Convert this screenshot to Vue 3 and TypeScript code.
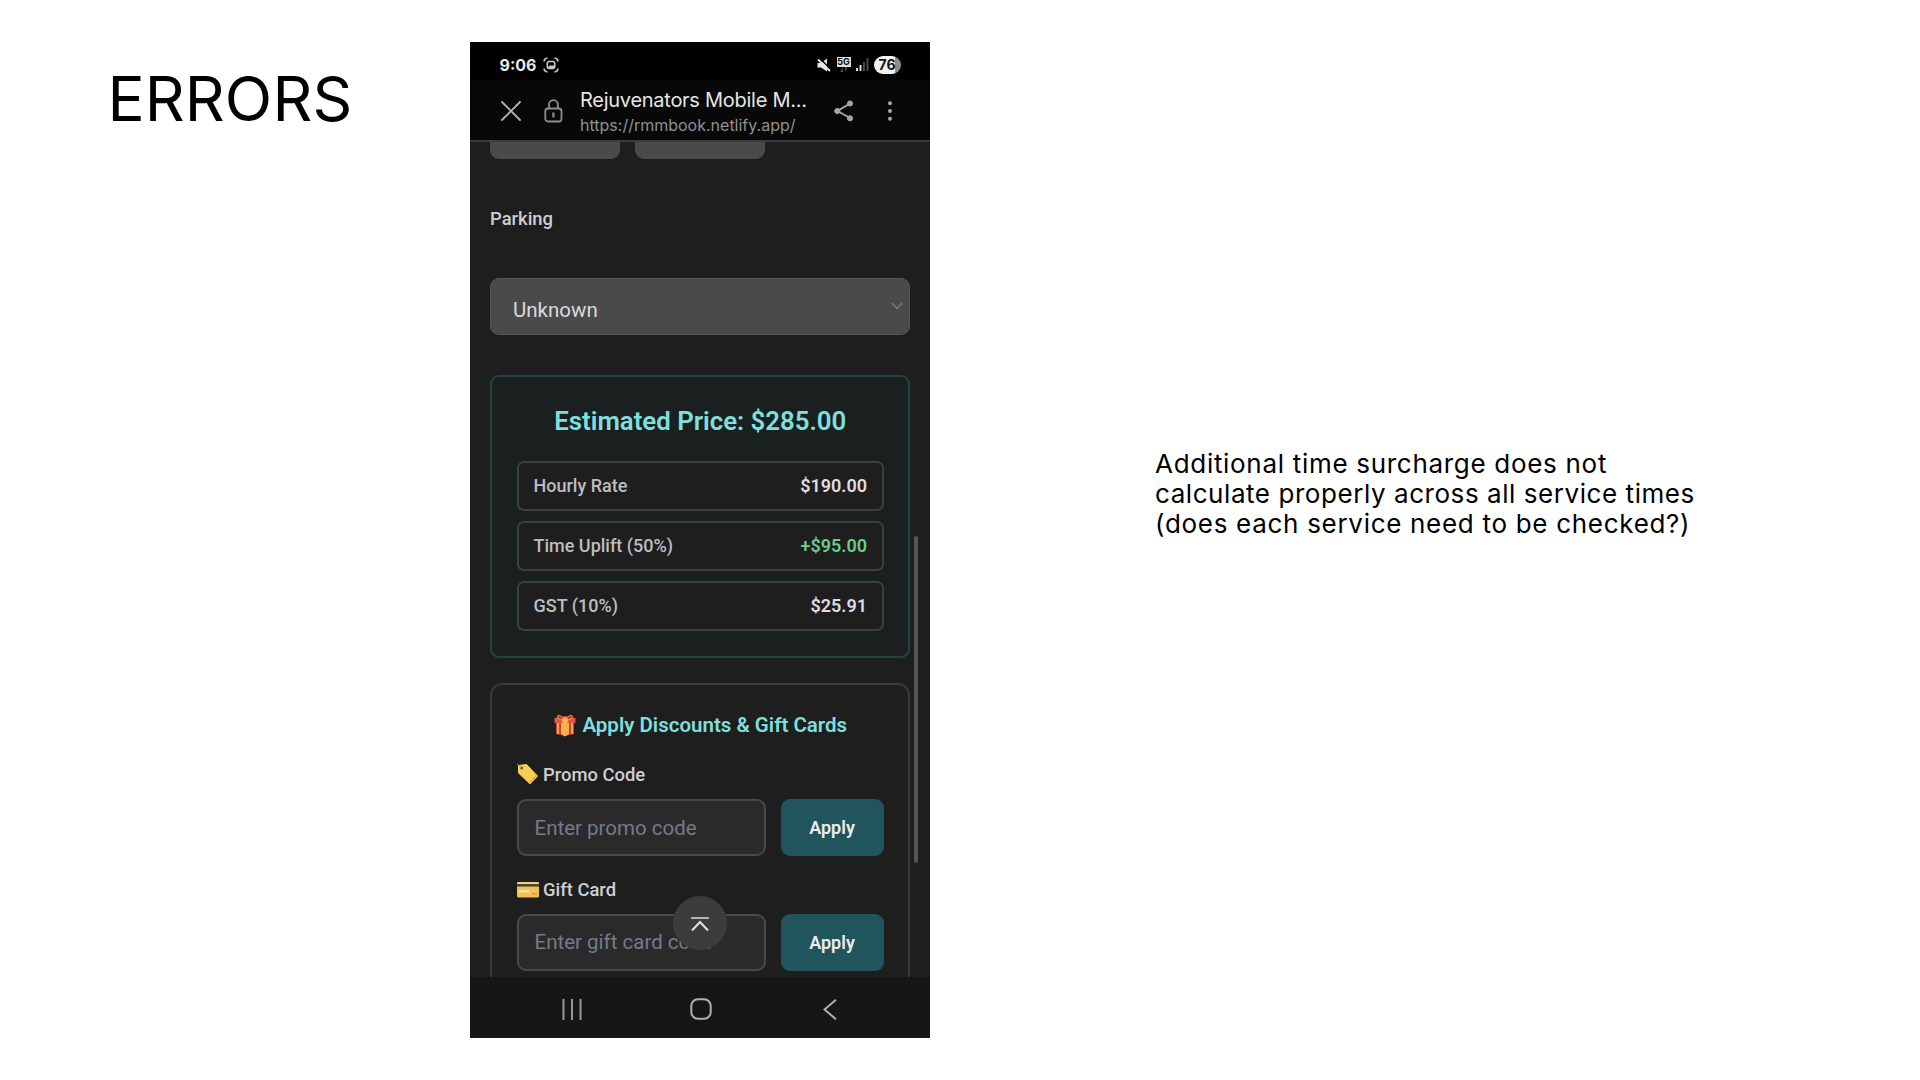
<script setup lang="ts">
interface PriceRow {
  label: string
  amount: string
  positive?: boolean
}

const rows: PriceRow[] = [
  { label: 'Hourly Rate', amount: '$190.00' },
  { label: 'Time Uplift (50%)', amount: '+$95.00', positive: true },
  { label: 'GST (10%)', amount: '$25.91' },
]

const notes: string[] = [
  'Additional time surcharge does not',
  'calculate properly across all service times',
  '(does each service need to be checked?)',
]
</script>

<template>
  <main class="slide">
    <h1 class="title">ERRORS</h1>

    <section class="phone">
      <div class="status">
        <span class="clock">9:06</span>
        <svg class="capture" width="16" height="16" viewBox="0 0 16 16" fill="none" stroke="#c9c9c9" stroke-width="1.6">
          <path d="M1 4.500Q1.300 1.300 4.500 1M11.500 1Q14.700 1.300 15 4.500M15 11.500Q14.700 14.700 11.500 15M4.500 15Q1.300 14.700 1 11.500" />
          <rect x="4.300" y="4.500" width="7.400" height="7" rx="2" />
          <path d="M5 10.300L7.500 8L9 9L10 8L11 9.300V11H5Z" fill="#c9c9c9" stroke="none" />
        </svg>
        <div class="status-right">
          <svg width="14" height="14" viewBox="0 0 14 14">
            <path d="M.5 5H4L10 .5V13.500L4 9.500H.5Z" fill="#e6e6e6" />
            <path d="M2 0L14 11" stroke="#000" stroke-width="1.500" />
            <path d="M1 1.500L13 13" stroke="#e6e6e6" stroke-width="1.800" />
          </svg>
          <div class="net">
            <span class="net-tag">5G</span>
            <svg width="12" height="6" viewBox="0 0 12 6" fill="#4c4c4c"><path d="M2.500 4L5 0V5H2.500ZM7 0H9.500L7 5Z" /></svg>
          </div>
          <svg class="bars" width="13" height="13" viewBox="0 0 13 13">
            <path d="M0 10H2V13H0ZM3.500 7H5.500V13H3.500Z" fill="#ddd" />
            <path d="M7 4H9V13H7ZM10.500 0H12.500V13H10.500Z" fill="#4a4a4a" />
          </svg>
          <span class="battery">76</span>
        </div>
      </div>

      <header class="browser">
        <svg class="close" width="20" height="20" viewBox="0 0 20 20" stroke="#b4b4b4" stroke-width="1.800" stroke-linecap="round">
          <path d="M1 1L19 19M19 1L1 19" />
        </svg>
        <svg class="lock" width="19" height="24" viewBox="0 0 19 24" fill="none" stroke="#8e8e8e" stroke-width="1.800">
          <rect x="1.300" y="9.500" width="16.200" height="13" rx="2.800" />
          <path d="M5 9.500V5.500A4.400 4.400 0 0 1 13.800 5.500V9.500" />
          <path d="M9.400 13.500V18.500" stroke-width="2.200" />
        </svg>
        <div class="page">
          <div class="page-title">Rejuvenators Mobile M...</div>
          <div class="page-url">https://rmmbook.netlify.app/</div>
        </div>
        <svg class="share" width="20" height="22" viewBox="0 0 20 22" fill="#a6a6a6" stroke="#a6a6a6">
          <path d="M16 3.500L3.500 11L16 18" fill="none" stroke-width="2" />
          <circle cx="16" cy="3.500" r="2.600" /><circle cx="3.300" cy="11" r="2.600" /><circle cx="16" cy="18.300" r="2.600" />
        </svg>
        <svg class="more" width="6" height="20" viewBox="0 0 6 20" fill="#a6a6a6">
          <circle cx="3" cy="2.200" r="2" /><circle cx="3" cy="10" r="2" /><circle cx="3" cy="17.800" r="2" />
        </svg>
      </header>

      <div class="content">
        <div class="stubs"><i /><i /></div>
        <label class="field-label">Parking</label>
        <div class="select">
          <span>Unknown</span>
          <svg width="12" height="8" viewBox="0 0 12 8" fill="none" stroke="#777" stroke-width="1.600"><path d="M1 1L6 6.500L11 1" /></svg>
        </div>

        <section class="price">
          <h2>Estimated Price: $285.00</h2>
          <div v-for="row in rows" :key="row.label" class="row">
            <span>{{ row.label }}</span>
            <span class="amount" :class="{ positive: row.positive }">{{ row.amount }}</span>
          </div>
        </section>

        <section class="discounts">
          <h3>
            <svg width="24" height="24" viewBox="0 0 24 24">
              <path d="M3 9H21V21L12 23L3 21Z" fill="#c4402f" />
              <path d="M1.500 5L12 3L22.500 5V10L12 11L1.500 10Z" fill="#e25543" />
              <path d="M5 10V21M19 10V21" stroke="#f3a04c" stroke-width="2.200" />
              <path d="M8 10H16V21L12 23.500L8 21Z" fill="#f5b350" />
              <path d="M11.500 7C7 0 3 2 5 5.500L11.500 8ZM12.500 7C17 0 21 2 19 5.500L12.500 8Z" fill="#c63b31" stroke="#f09b60" />
              <circle cx="12" cy="7.500" r="3" fill="#f7b550" />
            </svg>
            <span>Apply Discounts &amp; Gift Cards</span>
          </h3>

          <div class="code-label">
            <svg width="22" height="22" viewBox="0 0 22 22">
              <path d="M1.500 2.500L9.500 1.500L20.500 13L13 21L1.500 10Z" fill="#f7ce55" stroke="#f7ce55" stroke-linejoin="round" />
              <path d="M20.500 13L13 21L11.500 19.500L19 11.500Z" fill="#e9ad3d" />
              <circle cx="4.700" cy="5" r="1.500" fill="#6b5430" /><path d="M0 1L4.700 5" stroke="#aaa" stroke-width=".8" />
            </svg>
            <span>Promo Code</span>
          </div>
          <div class="code-row">
            <div class="input">Enter promo code</div>
            <button type="button">Apply</button>
          </div>

          <div class="code-label gift">
            <svg width="22" height="22" viewBox="0 0 22 22">
              <rect x="0" y="4" width="22" height="15.500" rx="1.500" fill="#f3c253" />
              <path d="M0 5.500A1.500 1.500 0 0 1 1.500 4H20.500A1.500 1.500 0 0 1 22 5.500V6H0Z" fill="#ecd27d" />
              <rect x="0" y="6" width="22" height="2.600" fill="#4b4230" />
              <path d="M2 12H12V14.500H2Z" fill="#f9e3a2" /><path d="M15 15H20V17H15Z" fill="#e0a23c" />
            </svg>
            <span>Gift Card</span>
          </div>
          <div class="code-row gift">
            <div class="input">Enter gift card code</div>
            <button type="button">Apply</button>
          </div>
        </section>

        <div class="scroll-thumb" />
        <div class="to-top">
          <svg width="20" height="16" viewBox="0 0 20 16" fill="none" stroke="#e4e4e4" stroke-width="2"><path d="M1 2H19" stroke="#b5b5b5" /><path d="M2 14.500L10 6L18 14.500" /></svg>
        </div>
      </div>

      <nav class="nav">
        <svg width="20" height="21" viewBox="0 0 20 21" stroke="#989898" stroke-width="2"><path d="M1.500 0V21M10 0V21M18.500 0V21" /></svg>
        <svg class="home" width="22" height="22" viewBox="0 0 22 22" fill="none" stroke="#b0b0b0" stroke-width="2"><rect x="1.300" y="1.300" width="19.400" height="19.400" rx="6.500" /></svg>
        <svg width="14" height="21" viewBox="0 0 14 21" fill="none" stroke="#b0b0b0" stroke-width="2"><path d="M13 .8L1.500 10.500L13 20.200" /></svg>
      </nav>
    </section>

    <p class="note">
      <span v-for="line in notes" :key="line">{{ line }}</span>
    </p>
  </main>
</template>

<style>
body {
  margin: 0;
  background: #fff;
}
</style>

<style scoped>
.slide {
  display: flex;
  align-items: flex-start;
  box-sizing: border-box;
  width: 1920px;
  height: 1080px;
  overflow: hidden;
  background: #fff;
  font-family: Roboto, "Liberation Sans", sans-serif;
}
.slide svg {
  display: block;
  flex: none;
}
.title {
  flex: none;
  width: 470px;
  margin: 62px 0 0;
  padding-left: 107.500px;
  box-sizing: border-box;
  font: 400 62px/74px Inter, sans-serif;
  letter-spacing: 0.100px;
  color: #000;
  white-space: nowrap;
}
.phone {
  display: flex;
  flex-direction: column;
  flex: none;
  width: 460px;
  height: 996px;
  margin-top: 42px;
  background: #1e1e1e;
  overflow: hidden;
}
.status {
  display: flex;
  align-items: center;
  flex: none;
  height: 38px;
  padding: 7px 29.500px 0 29.500px;
  box-sizing: border-box;
  background: #000;
}
.clock {
  font: 700 16px/20px Inter, sans-serif;
  color: #e8e8e8;
}
.capture {
  margin-left: 7px;
}
.status-right {
  display: flex;
  align-items: center;
  margin-left: auto;
}
.net {
  display: flex;
  flex-direction: column;
  align-items: center;
  margin: 0 5px 0 6px;
}
.net-tag {
  width: 14px;
  height: 10px;
  background: #ddd;
  color: #111;
  font: 700 9px/10px Inter, sans-serif;
  text-align: center;
}
.bars {
  margin-right: 5px;
}
.battery {
  width: 27px;
  height: 18px;
  border-radius: 9px;
  background: linear-gradient(90deg, #f1f1f1 76%, #8d8d8d 76%);
  color: #111;
  font: 700 14px/18px Inter, sans-serif;
  text-align: center;
}
.browser {
  display: flex;
  align-items: center;
  flex: none;
  height: 62px;
  box-sizing: border-box;
  padding: 1px 37.500px 0 30.500px;
  border-bottom: 2px solid #3c3c3c;
  background: #080808;
}
.lock {
  margin-left: 23px;
}
.page {
  width: 240px;
  margin: 2px 0 0 17.500px;
  font-family: Inter, sans-serif;
  white-space: nowrap;
}
.page-title {
  font-size: 20px;
  line-height: 26px;
  letter-spacing: -0.270px;
  color: #e6e6e6;
}
.page-url {
  font-size: 16px;
  line-height: 24px;
  color: #919191;
}
.share {
  margin-left: 13.500px;
}
.more {
  margin-left: auto;
}
.content {
  position: relative;
  flex: none;
  height: 835px;
  box-sizing: border-box;
  padding: 0 20px;
  overflow: hidden;
}
.stubs {
  display: flex;
  gap: 15px;
}
.stubs i {
  width: 130px;
  height: 17px;
  border-radius: 0 0 9px 9px;
  background: #4a4a4a;
}
.field-label {
  display: block;
  margin-top: 47px;
  font-size: 18.400px;
  font-weight: 500;
  line-height: 26px;
  color: #cfcfd4;
}
.select {
  display: flex;
  align-items: center;
  justify-content: space-between;
  height: 57px;
  margin-top: 46px;
  box-sizing: border-box;
  padding: 6px 6px 0 22px;
  border: 1px solid #555;
  border-radius: 9px;
  background: #4a4a4a;
  color: #dadade;
  font-size: 20.500px;
}
.select svg {
  margin-top: -7px;
}
.price {
  display: flex;
  flex-direction: column;
  gap: 10px;
  height: 283px;
  margin-top: 40px;
  box-sizing: border-box;
  padding: 24px 24.500px 0 25px;
  border: 2px solid #254244;
  border-radius: 9px;
  background: #1a1f20;
}
.price h2 {
  flex: none;
  margin: 0 0 14px;
  height: 36px;
  font-size: 25.800px;
  font-weight: 600;
  line-height: 40px;
  text-align: center;
  color: #7fdfdf;
}
.row {
  display: flex;
  flex: none;
  align-items: center;
  justify-content: space-between;
  height: 50px;
  box-sizing: border-box;
  padding: 0 14.500px 2px;
  border: 2px solid #3d3f40;
  border-radius: 7px;
  background: #1e1e1e;
  color: #bdbdc2;
  font-size: 18px;
  font-weight: 500;
}
.amount {
  color: #dedee2;
  font-weight: 600;
}
.amount.positive {
  color: #6acb8c;
}
.discounts {
  height: 340px;
  margin-top: 25px;
  box-sizing: border-box;
  padding: 25px 24.500px 0 25px;
  border: 2px solid #3a3a3a;
  border-radius: 12px;
}
.discounts h3 {
  display: flex;
  align-items: center;
  justify-content: center;
  gap: 5px;
  height: 30px;
  margin: 0;
  font-size: 20.500px;
  font-weight: 600;
  color: #7fdfdf;
  white-space: nowrap;
}
.code-label {
  display: flex;
  align-items: center;
  gap: 4px;
  height: 26px;
  margin-top: 21px;
  font-size: 18.400px;
  font-weight: 500;
  color: #cfcfd4;
}
.code-label.gift {
  margin-top: 20.500px;
}
.code-row {
  display: flex;
  justify-content: space-between;
  margin-top: 12px;
}
.input {
  display: flex;
  align-items: center;
  width: 249px;
  height: 56.500px;
  box-sizing: border-box;
  padding: 1px 15.500px 0;
  border: 2.500px solid #494949;
  border-radius: 9px;
  background: #2a2a2a;
  color: #747b89;
  font-size: 20.500px;
  white-space: nowrap;
}
.code-row.gift .input {
  padding-top: 0;
  padding-bottom: 1px;
}
.code-row.gift button {
  line-height: 55px;
}
.discounts button {
  width: 103px;
  height: 56.500px;
  padding: 0;
  border: 0;
  border-radius: 9px;
  background: #20555e;
  color: #ececec;
  font: 600 18px/57px Roboto, sans-serif;
}
.scroll-thumb {
  position: absolute;
  top: 394px;
  right: 12px;
  width: 4px;
  height: 327px;
  border-radius: 2px;
  background: #555;
}
.to-top {
  position: absolute;
  top: 754px;
  left: 203px;
  display: flex;
  align-items: center;
  justify-content: center;
  width: 54px;
  height: 54px;
  box-sizing: border-box;
  padding-top: 2px;
  border-radius: 50%;
  background: #3c3c3c;
}
.nav {
  display: flex;
  align-items: center;
  justify-content: space-between;
  flex: none;
  height: 61px;
  box-sizing: border-box;
  padding: 3px 93px 0 92px;
  background: #161616;
}
.home {
  margin-right: 3px;
}
.note {
  display: flex;
  flex-direction: column;
  align-items: flex-start;
  margin: 449px 0 0 225px;
  color: #000;
  font: 400 26px/30px Inter, sans-serif;
  letter-spacing: 0.700px;
  white-space: nowrap;
}
.note span:nth-child(2) {
  letter-spacing: 0.560px;
}
</style>
